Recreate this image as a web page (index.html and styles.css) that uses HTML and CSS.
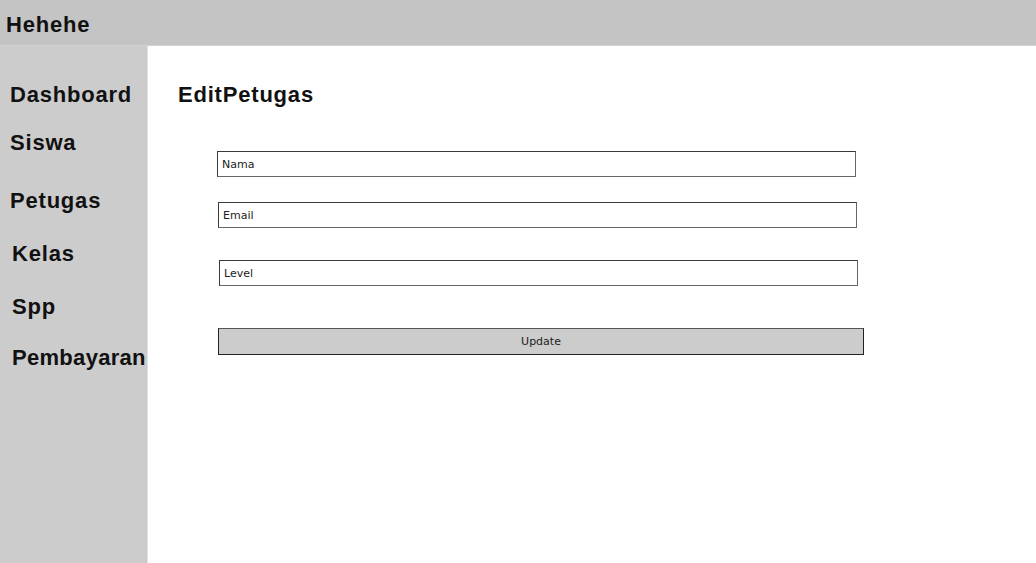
FILE: index.html
```html
<!DOCTYPE html>
<html lang="en">
<head>
    <meta charset="UTF-8">
    <meta name="viewport" content="width=device-width, initial-scale=1.0">
    <title>Edit Petugas</title>
    <link rel="stylesheet" href="styles.css">
</head>
<body>
    <header class="topbar">Hehehe</header>

    <div class="layout">
        <nav class="sidebar">
            <a class="nav-item nav-dashboard" href="#">Dashboard</a>
            <a class="nav-item nav-siswa" href="#">Siswa</a>
            <a class="nav-item nav-petugas" href="#">Petugas</a>
            <a class="nav-item nav-kelas" href="#">Kelas</a>
            <a class="nav-item nav-spp" href="#">Spp</a>
            <a class="nav-item nav-pembayaran" href="#">Pembayaran</a>
        </nav>

        <main class="content">
            <h1>EditPetugas</h1>

            <form class="edit-form">
                <input type="text" class="field field-nama" placeholder="Nama">
                <input type="email" class="field field-email" placeholder="Email">
                <input type="text" class="field field-level" placeholder="Level">
                <button type="button" class="btn-update">Update</button>
            </form>
        </main>
    </div>
</body>
</html>
```

FILE: styles.css
```css
/* Reset default styles */
* {
    margin: 0;
    padding: 0;
    box-sizing: border-box;
}

html, body {
    height: 100%;
}

body {
    font-family: 'Liberation Sans', Arial, sans-serif;
    color: #111;
    background-color: #fff;
    display: flex;
    flex-direction: column;
    overflow: hidden;
}

.topbar {
    height: 46px;
    background-color: #c4c4c4;
    border-bottom: 1px solid #d2d2d2;
    padding: 13px 0 0 6px;
    font-size: 22px;
    font-weight: bold;
    letter-spacing: 0.8px;
    line-height: 24px;
}

.layout {
    flex: 1;
    display: flex;
}

.sidebar {
    width: 148px;
    background-color: #cccccc;
    border-right: 1px solid #e2e2e2;
    display: flex;
    flex-direction: column;
    overflow: hidden;
    white-space: nowrap;
}

.nav-item {
    font-size: 22px;
    font-weight: bold;
    letter-spacing: 0.8px;
    line-height: 24px;
    color: #111;
    text-decoration: none;
    padding-left: 10px;
}

.nav-dashboard { margin-top: 37px; }
.nav-siswa { margin-top: 24px; }
.nav-petugas { margin-top: 34px; }
.nav-kelas { margin-top: 29px; padding-left: 12px; }
.nav-spp { margin-top: 29px; padding-left: 12px; }
.nav-pembayaran { margin-top: 27px; padding-left: 12px; letter-spacing: 0.3px; }

.content {
    flex: 1;
    padding: 37px 0 0 30px;
}

h1 {
    font-size: 22px;
    font-weight: bold;
    letter-spacing: 0.8px;
    line-height: 24px;
}

.edit-form {
    display: flex;
    flex-direction: column;
    align-items: flex-start;
    padding-left: 39px;
}

.field {
    width: 639px;
    height: 26px;
    border: 1px solid #3a3a3a;
    border-right-color: #666;
    border-bottom-color: #666;
    padding: 0 4px;
    font-family: 'Comic Sans MS', 'DejaVu Sans', sans-serif;
    font-size: 11px;
    color: #222;
    background: #fff;
}

.field::placeholder {
    color: #222;
}

.field-nama { margin-top: 44px; }
.field-email { margin-top: 25px; margin-left: 1px; }
.field-level { margin-top: 32px; margin-left: 2px; }

.btn-update {
    margin-top: 42px;
    margin-left: 1px;
    width: 646px;
    height: 27px;
    background-color: #cccccc;
    border: 1px solid #222;
    border-top-color: #555;
    font-family: 'Comic Sans MS', 'DejaVu Sans', sans-serif;
    font-size: 11px;
    color: #222;
    cursor: pointer;
}
```
